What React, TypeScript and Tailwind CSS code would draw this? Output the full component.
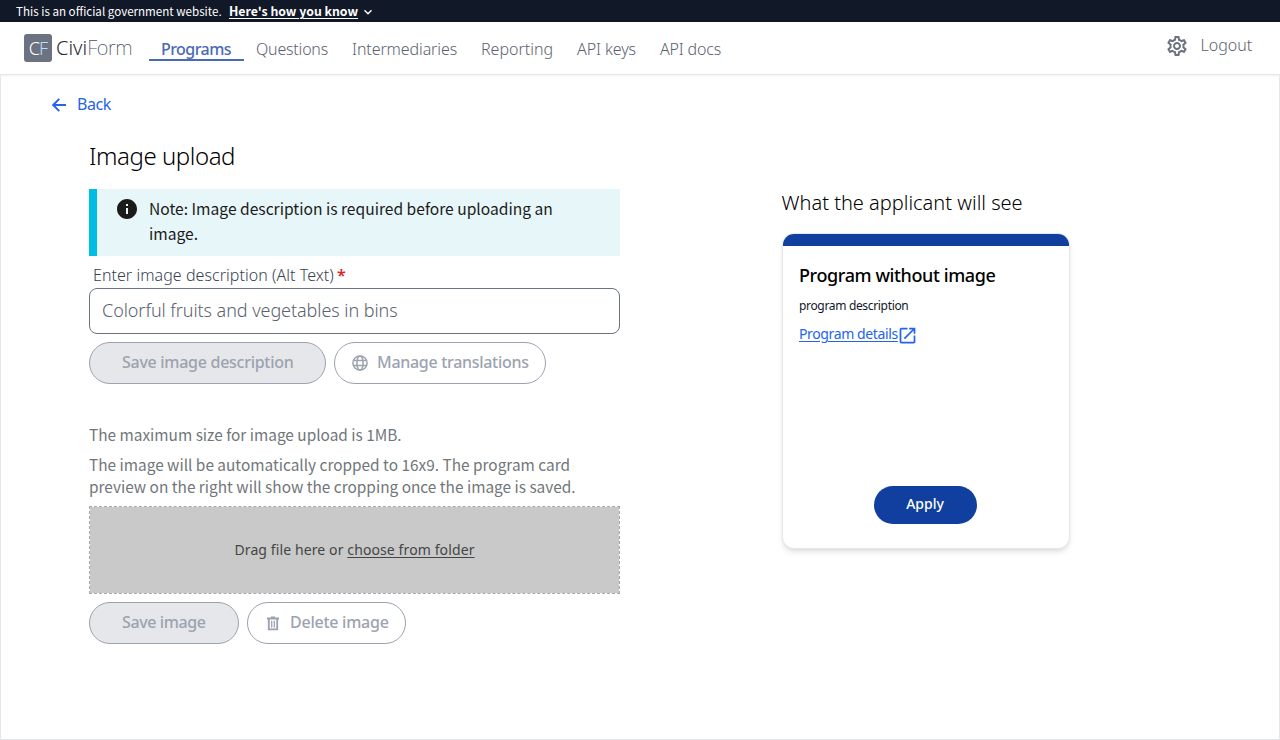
import type { ReactNode } from 'react';
import { MdExpandMore, MdInfo, MdOpenInNew, MdOutlineSettings } from 'react-icons/md';

function GovBanner() {
  return (
    <div className="flex h-[22px] items-center bg-[#111827] pl-4 text-white font-['Noto_Sans_CJK_SC',sans-serif]">
      <span className="w-[213px] text-[11.6px] leading-[22px]">This is an official government website.</span>
      <a href="#" className="w-[129px] text-[12.3px] leading-[22px] font-bold underline underline-offset-2 whitespace-nowrap">
        Here's how you know
      </a>
      <MdExpandMore className="ml-[2px] mt-[2px] size-4" />
    </div>
  );
}

const links = [
  { label: 'Questions', style: 'w-[96px] tracking-[-0.2px]' },
  { label: 'Intermediaries', style: 'w-[129px] tracking-[-0.1px]' },
  { label: 'Reporting', style: 'w-[96px]' },
  { label: 'API keys', style: 'w-[83px] tracking-[-0.09px]' },
  { label: 'API docs', style: 'w-[85px] tracking-[-0.18px]' },
];

function Header() {
  return (
    <header className="flex h-[52px] bg-white text-base text-[#6b7280] shadow-sm">
      <div className="flex w-[149px] pl-6 pt-3">
        <div className="flex size-7 items-center justify-center rounded-[3px] bg-[#6b7280] text-[18px] leading-none tracking-[-0.9px] text-white">
          <span className="font-light">C</span>
          <span className="font-light text-[#bfdbfe]">F</span>
        </div>
        <div className="ml-1 text-[20px] leading-7 whitespace-nowrap">
          <span className="font-light text-[#1f2937]">Civi</span>
          <span className="font-extralight tracking-[-0.35px] text-[#4b5563]">Form</span>
        </div>
      </div>
      <nav className="flex flex-1 pt-[15px] font-light whitespace-nowrap text-[#5b6270]">
        <a href="#" className="h-6 w-[95px] border-b-2 border-[#4a6bb3] pl-3 font-medium tracking-[-0.55px] text-[#4a6bb3]">
          Programs
        </a>
        {links.map((l) => (
          <a key={l.label} href="#" className={`h-6 pl-3 ${l.style}`}>
            {l.label}
          </a>
        ))}
      </nav>
      <div className="flex h-6 items-center gap-3 pr-7 mt-[11px] font-light">
        <MdOutlineSettings className="size-6 mt-[1px]" />
        <a href="#" className="w-[51.5px] text-[#5b6270]">Logout</a>
      </div>
    </header>
  );
}

function ArrowIcon() {
  return (
    <svg viewBox="0 0 14 14" className="h-[14px] w-[14px]" fill="none" stroke="currentColor" strokeWidth="1.9">
      <path d="M14 7H1.5M7.3 0.9L1.2 7l6.1 6.1" />
    </svg>
  );
}

function GlobeIcon() {
  return (
    <svg viewBox="0 0 16 16" className="size-4" fill="none" stroke="currentColor" strokeWidth="1.5">
      <circle cx="8" cy="8" r="7.1" />
      <ellipse cx="8" cy="8" rx="3.1" ry="7.1" />
      <path d="M1.4 5.5h13.2M1.4 10.5h13.2" />
    </svg>
  );
}

function TrashIcon() {
  return (
    <svg viewBox="0 0 14 15" className="h-[15px] w-[14px]" fill="none" stroke="currentColor">
      <path d="M1 2.5h12M4.8 1.3h4.4" strokeWidth="1.8" />
      <path d="M2.8 2.5v10.9h8.4v-10.9" strokeWidth="1.9" />
      <path d="M5.7 4.8v6.6M8.3 4.8v6.6" strokeWidth="1.3" />
    </svg>
  );
}

function PillButton({ className, children }: { className: string; children: ReactNode }) {
  return (
    <button
      className={`flex h-[42px] items-center rounded-full border border-[#9ca3af] pb-[2px] text-base font-medium whitespace-nowrap text-[#9ca3af] ${className}`}
    >
      {children}
    </button>
  );
}

function UploadForm() {
  return (
    <section className="w-[531px]">
      <h1 className="h-8 text-[24px] leading-8 font-light tracking-[-0.44px] text-black">Image upload</h1>
      <div className="mt-[17px] flex h-[67px] border-l-8 border-[#00bde3] bg-[#e7f6f8] pl-[18px] pt-[7px] text-[#1b1b1b]">
        <MdInfo className="mt-[1px] size-6" />
        <p className="ml-[10px] w-[430px] text-[15.6px] leading-[25px] font-['Noto_Sans_CJK_SC',sans-serif]">
          Note: Image description is required before uploading an image.
        </p>
      </div>
      <label className="mt-[7px] block h-[25px] pl-1 text-base leading-6 font-light tracking-[0.05px] text-[#374151]">
        Enter image description (Alt Text) <span className="-ml-[1px] font-semibold text-[#dc2626]">*</span>
      </label>
      <input
        type="text"
        placeholder="Colorful fruits and vegetables in bins"
        className="block h-[46px] w-full rounded-lg border border-[#6b7280] bg-white px-3 pb-[2px] text-[18px] font-light tracking-[-0.07px] placeholder:text-[#5b6270] placeholder:opacity-100"
      />
      <div className="mt-2 flex gap-2">
        <PillButton className="w-[237px] bg-[#e5e7eb] pl-8 tracking-[-0.28px]">Save image description</PillButton>
        <PillButton className="w-[212px] bg-white pl-[17px] tracking-[-0.3px]">
          <span className="mt-[2px] mr-[9px]">
            <GlobeIcon />
          </span>
          Manage translations
        </PillButton>
      </div>
      <div className="mt-[39px] text-[15.4px] leading-[22px] text-[#71767a] font-['Noto_Sans_CJK_SC',sans-serif]">
        <p className="whitespace-nowrap">The maximum size for image upload is 1MB.</p>
        <p className="mt-2 w-[500px]">
          The image will be automatically cropped to 16x9. The program card preview on the right will show the cropping
          once the image is saved.
        </p>
      </div>
      <div className="mt-[9px] flex h-[88px] items-center justify-center border border-dashed border-[#a9a9a9] bg-[#c9c9c9] bg-clip-padding text-sm tracking-[0.11px] whitespace-pre text-[#454545]">
        Drag file here or <span className="underline underline-offset-2">choose from folder</span>
      </div>
      <div className="mt-2 flex gap-2">
        <PillButton className="w-[150px] bg-[#e5e7eb] pl-8 tracking-[-0.38px]">Save image</PillButton>
        <PillButton className="w-[159px] bg-white pl-[18px] tracking-[-0.25px]">
          <span className="mt-[2px] mr-[10px]">
            <TrashIcon />
          </span>
          Delete image
        </PillButton>
      </div>
    </section>
  );
}

function ProgramPreview() {
  return (
    <section className="ml-[162px] pt-[49px] text-black">
      <h2 className="-ml-[0.5px] text-[20px] leading-7 font-light whitespace-nowrap">What the applicant will see</h2>
      <div className="mt-[16px] h-[316px] w-[288px] flex flex-col overflow-hidden rounded-xl border border-[#e5e7eb] bg-white shadow-md">
        <div className="h-3 shrink-0 bg-[#113f9f]" />
        <div className="flex flex-1 flex-col px-4">
          <h3 className="mt-[15px] text-[18px] leading-7 font-medium tracking-[-0.4px]">Program without image</h3>
          <p className="mt-[9px] text-xs tracking-[-0.33px] text-gray-900">program description</p>
          <a href="#" className="mt-[10px] flex h-5 items-center text-sm tracking-[-0.38px] text-[#2563eb]">
            <span className="underline underline-offset-2">Program details</span>
            <MdOpenInNew className="-ml-[1px] mt-[2px] size-[21px]" />
          </a>
          <button className="mt-auto mr-[2px] mb-6 h-[38px] w-[103px] self-center rounded-full bg-[#113f9f] pb-[2px] text-sm font-medium text-white">
            Apply
          </button>
        </div>
      </div>
    </section>
  );
}

export default function App() {
  return (
    <div className="flex h-[740px] w-[1280px] flex-col overflow-hidden bg-white font-['Noto_Sans',sans-serif]">
      <GovBanner />
      <Header />
      <main className="flex-1 border border-[#e5e7eb] pl-12 pt-[17px]">
        <a href="#" className="flex h-6 items-center pl-[3px] text-base tracking-[-0.4px] text-[#2563eb]">
          <span className="mt-[2px] mr-[11px]">
            <ArrowIcon />
          </span>
          Back
        </a>
        <div className="mt-[24px] ml-10 flex">
          <UploadForm />
          <ProgramPreview />
        </div>
      </main>
    </div>
  );
}
